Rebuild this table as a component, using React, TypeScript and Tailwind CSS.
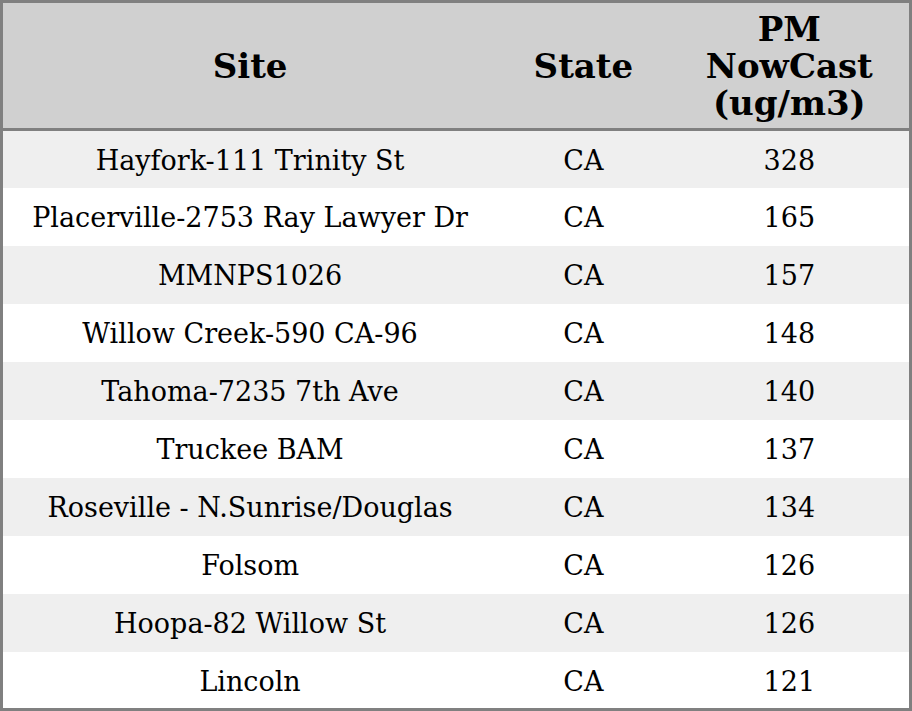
import React from "react";

const rows = [
  ["Hayfork-111 Trinity St", "CA", "328"],
  ["Placerville-2753 Ray Lawyer Dr", "CA", "165"],
  ["MMNPS1026", "CA", "157"],
  ["Willow Creek-590 CA-96", "CA", "148"],
  ["Tahoma-7235 7th Ave", "CA", "140"],
  ["Truckee BAM", "CA", "137"],
  ["Roseville - N.Sunrise/Douglas", "CA", "134"],
  ["Folsom", "CA", "126"],
  ["Hoopa-82 Willow St", "CA", "126"],
  ["Lincoln", "CA", "121"],
];

export default function App() {
  return (
    <div className="w-[912px] h-[711px] bg-white font-['DejaVu_Serif',serif] text-black">
      <table className="w-full h-[711px] border-collapse border-[3px] border-[#808080]">
        <thead>
          <tr className="bg-[#d0d0d0] border-b-[3px] border-[#808080] h-[128px]">
            <th className="w-[494px] text-[34px] leading-[37px] font-bold pt-[2px]">Site</th>
            <th className="w-[172px] text-[34px] leading-[37px] font-bold pt-[2px]">State</th>
            <th className="w-[240px] text-[34px] leading-[37px] font-bold pt-[2px]">
              PM
              <br />
              NowCast
              <br />
              (ug/m3)
            </th>
          </tr>
        </thead>
        <tbody>
          {rows.map((r, i) => (
            <tr key={i} className={`h-[57px] ${i % 2 === 0 ? "bg-[#efefef]" : "bg-white"}`}>
              <td className="text-center text-[27px] p-0 pt-1">{r[0]}</td>
              <td className="text-center text-[27px] p-0 pt-1">{r[1]}</td>
              <td className="text-center text-[27px] p-0 pt-1">{r[2]}</td>
            </tr>
          ))}
        </tbody>
      </table>
    </div>
  );
}
